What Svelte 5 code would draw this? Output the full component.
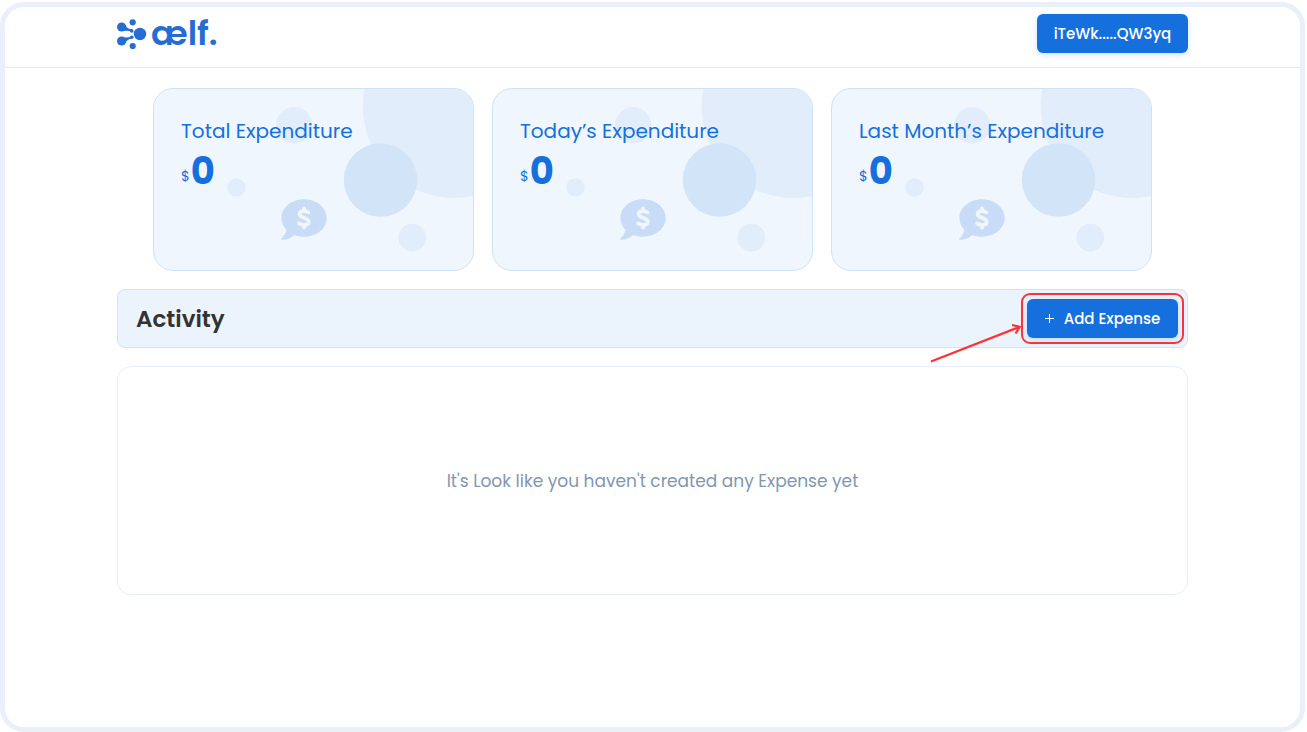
<script>
  const account = 'iTeWk.....QW3yq';
  const cards = [
    { title: 'Total Expenditure', amount: 0 },
    { title: 'Today’s Expenditure', amount: 0 },
    { title: 'Last Month’s Expenditure', amount: 0 },
  ];
</script>

<div class="frame">
  <header>
    <div class="container bar">
      <a class="logo" href="/" aria-label="ælf.">
        <svg width="32" height="32" viewBox="0 0 32 32" fill="currentColor" aria-hidden="true">
          <circle cx="4.6" cy="9" r="4.6" />
          <circle cx="4.6" cy="23" r="4.6" />
          <circle cx="15.7" cy="4.3" r="3.1" />
          <circle cx="15.7" cy="28" r="3.1" />
          <circle cx="23" cy="16" r="6.2" />
          <circle cx="14.8" cy="12.9" r="1.8" />
          <circle cx="14.8" cy="19.2" r="1.8" />
          <path d="M7.8 5.9Q9.8 11 15 11.6L15 14Q10 11.900 6.500 13.100ZM7.800 26.100Q9.800 21.200 15 20.600L15 18.200Q10 20.300 6.500 19.200Z" />
        </svg>
        <span>ælf.</span>
      </a>
      <button class="primary" type="button">{account}</button>
    </div>
  </header>

  <main class="container">
    <section class="cards">
      {#each cards as card}
        <article class="card">
          <svg class="art" viewBox="0 0 321 183" preserveAspectRatio="xMaxYMin slice" aria-hidden="true">
            <g fill="#e1edfb">
              <circle cx="302" cy="17.6" r="92" />
              <circle cx="141" cy="36.5" r="18.3" />
              <circle cx="83" cy="99" r="9.3" />
              <circle cx="260" cy="149.5" r="14" />
            </g>
            <circle cx="228" cy="91.5" r="37" fill="#d2e4f8" />
            <path
              fill="#c8dcf7"
              d="M151 111C163.700 111 173.800 119.400 173.800 129.800S163.700 148.600 151 148.600C147.500 148.600 144.200 148 141.300 146.800C138.500 149.400 133.500 151.700 128.500 151.700C127.900 151.700 127.700 151 128.100 150.600C130.700 147.900 132.800 144.900 133.200 141.600C130 138.400 128.200 134.300 128.200 129.800C128.200 119.400 138.300 111 151 111Z"
            />
            <path
              d="M151 120.200V123M151 137V139.600M155.400 124C150.500 122.100 146.500 122.700 146.500 126C146.500 130.200 155.700 129 155.700 133.600C155.700 137.400 150.500 137.400 146 135.300"
              fill="none"
              stroke="#eff6fe"
              stroke-width="3.8"
              stroke-linecap="round"
              stroke-linejoin="round"
            />
          </svg>
          <h2>{card.title}</h2>
          <p class="amount"><span>$</span><strong>{card.amount}</strong></p>
        </article>
      {/each}
    </section>

    <section class="activity">
      <h1>Activity</h1>
      <div class="marked">
        <button class="primary" type="button">
          <svg width="9" height="9" viewBox="0 0 9 9" aria-hidden="true">
            <path d="M4.500 0V9M0 4.500H9" stroke="currentColor" fill="none" />
          </svg>
          Add Expense
        </button>
        <span class="ring"></span>
        <svg class="arrow" width="92" height="42" viewBox="0 0 92 42" aria-hidden="true">
          <path d="M1 38.500L89.500 4M82 2L89.800 3.800L85.500 10.500" fill="none" stroke="#fb3336" stroke-width="2.300" stroke-linejoin="round" />
        </svg>
      </div>
    </section>

    <section class="empty">
      <p>It's Look like you haven't created any Expense yet</p>
    </section>
  </main>
</div>

<style>
  :global(body) {
    margin: 0;
    background: #fff;
  }
  .frame,
  .frame * {
    box-sizing: border-box;
  }
  .frame {
    min-height: calc(100vh - 2px);
    margin: 2px 2px 0 0;
    border: 5px solid #e9f0fa;
    border-radius: 24px;
    font-family: Poppins, Inter, sans-serif;
    color: #1570de;
  }
  h1,
  h2,
  p {
    margin: 0;
  }
  header {
    border-bottom: 1px solid #dfebf8;
    padding: 7px 0 14px;
  }
  .container {
    width: 82.7%;
    margin: 0 auto;
  }
  .bar {
    display: flex;
    align-items: center;
    justify-content: space-between;
  }
  .logo {
    display: flex;
    align-items: center;
    gap: 2px;
    color: #266cd3;
    text-decoration: none;
    font-size: 34px;
    font-weight: 600;
    line-height: 39px;
  }
  .primary {
    display: flex;
    align-items: center;
    justify-content: center;
    gap: 10px;
    min-width: 151px;
    height: 39px;
    padding: 0 16px;
    border: 0;
    border-radius: 6px;
    background: #1570de;
    color: #fff;
    font: inherit;
    font-size: 15px;
    font-weight: 500;
    line-height: 22px;
    white-space: nowrap;
    box-shadow: 0 2px 6px #1570de30;
    cursor: pointer;
  }
  main {
    display: flex;
    flex-direction: column;
    gap: 18px;
    padding: 20px 0;
  }
  .cards {
    display: grid;
    grid-template-columns: repeat(3, 1fr);
    gap: 18px;
    padding: 0 36px;
  }
  .card {
    position: relative;
    overflow: hidden;
    min-height: 183px;
    padding: 28px 27px;
    border: 1px solid #cfe2f8;
    border-radius: 20px;
    background: #eff6fe;
  }
  .art {
    position: absolute;
    inset: 0;
    width: 100%;
    height: 100%;
  }
  h2 {
    position: relative;
    font-size: 20px;
    font-weight: 400;
    line-height: 28px;
    white-space: nowrap;
  }
  .amount {
    position: relative;
    display: flex;
    align-items: flex-end;
    gap: 1px;
    font-size: 14px;
    line-height: 42px;
  }
  strong {
    font-size: 37px;
    font-weight: 700;
    line-height: 52px;
  }
  .activity {
    display: flex;
    align-items: center;
    justify-content: space-between;
    padding: 9px;
    padding-left: 18px;
    border: 1px solid #d3e2f6;
    border-radius: 8px;
    background: #ebf3fd;
  }
  h1 {
    color: #333;
    font-size: 23px;
    font-weight: 600;
    line-height: 32px;
  }
  .marked {
    position: relative;
  }
  .ring {
    position: absolute;
    inset: -6px;
    border: 2px solid #fb3336;
    border-radius: 9px;
    pointer-events: none;
  }
  .arrow {
    position: absolute;
    right: 156px;
    top: 24px;
    pointer-events: none;
  }
  .empty {
    display: grid;
    place-items: center;
    min-height: 229px;
    padding: 24px;
    border: 1px solid #e6effb;
    border-radius: 14px;
    color: #8196b1;
    font-size: 17px;
    line-height: 24px;
  }
</style>
